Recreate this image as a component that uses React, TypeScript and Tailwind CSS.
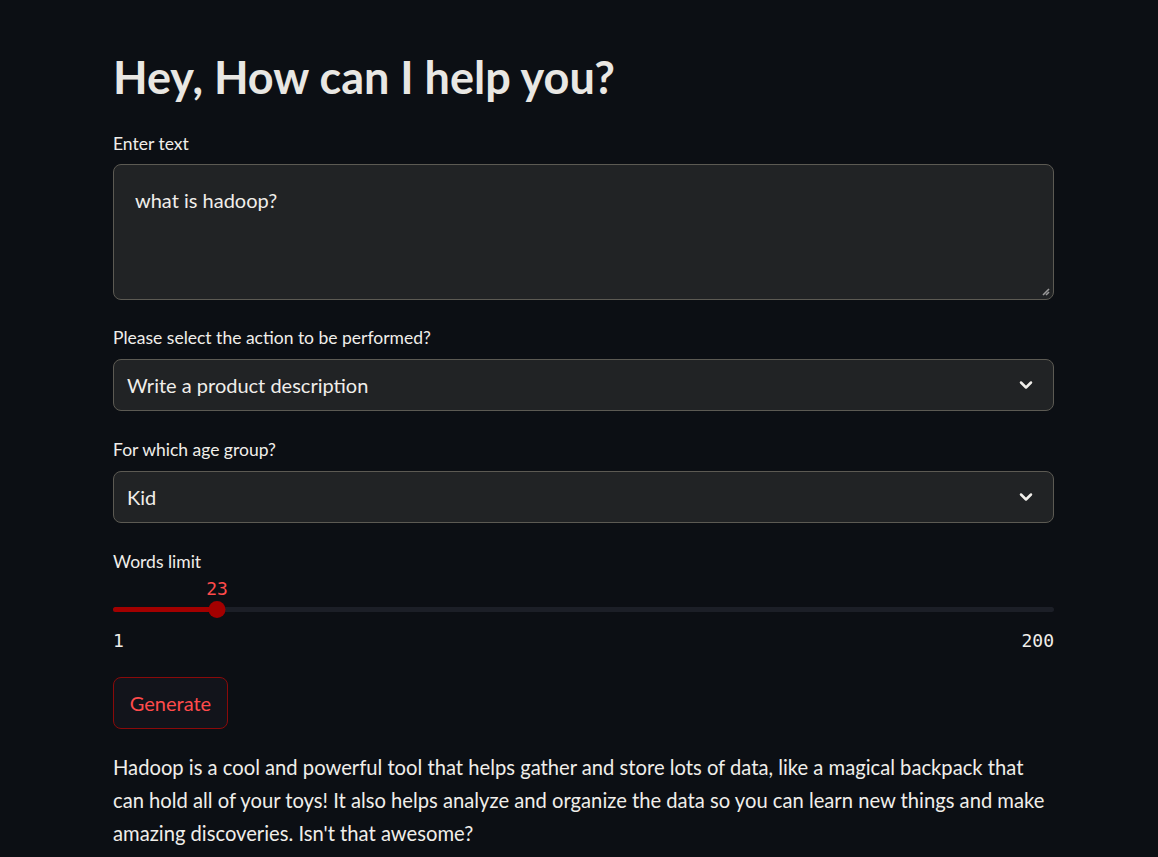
import React, { useState } from 'react'

const font = { fontFamily: 'Lato, "Noto Sans", sans-serif' }
const mono = { fontFamily: '"DejaVu Sans Mono", "Liberation Mono", monospace' }

const Chevron = () => (
    <svg width="20" height="20" viewBox="0 0 24 24" fill="none" stroke="#f0eeea" strokeWidth="3" strokeLinecap="round" strokeLinejoin="round">
        <polyline points="6 9 12 15 18 9" />
    </svg>
)

const SelectBox = ({ value }: { value: string }) => (
    <div className="flex h-[52px] w-full items-center justify-between rounded-lg border border-[#5c5a53] bg-[#212325] pl-[13px] pr-[17px]">
        <span className="text-[20px] text-[#f0eeea]">{value}</span>
        <Chevron />
    </div>
)

const App = () => {
    const [value] = useState(23)
    const pct = ((value - 1) / 199) * 100

    return (
        <div className="min-h-screen w-full bg-[#0c0f14] text-[#f0eeea]" style={font}>
            <div className="ml-[113px] flex w-[941px] flex-col pt-[46px]">
                <h1 className="h-[62px] text-[45px] font-bold leading-[62px] text-[#e9e7e3]">Hey, How can I help you?</h1>

                <label className="mt-[22px] h-[28px] text-[17.5px] leading-[28px]">Enter text</label>
                <div className="relative mt-[6px] h-[136px] rounded-lg border border-[#5c5a53] bg-[#212325] px-[21px] pt-[20px]">
                    <span className="text-[20px]">what is hadoop?</span>
                    <svg className="absolute bottom-[3px] right-[3px]" width="9" height="9" viewBox="0 0 9 9">
                        <line x1="8" y1="2" x2="2" y2="8" stroke="#9a9a9a" strokeWidth="1.6" />
                        <line x1="8" y1="5" x2="5" y2="8" stroke="#9a9a9a" strokeWidth="1.6" />
                    </svg>
                </div>

                <label className="mt-[24px] h-[28px] text-[17.5px] leading-[28px]">Please select the action to be performed?</label>
                <div className="mt-[7px]">
                    <SelectBox value="Write a product description" />
                </div>

                <label className="mt-[25px] h-[28px] text-[17.5px] leading-[28px]">For which age group?</label>
                <div className="mt-[7px]">
                    <SelectBox value="Kid" />
                </div>

                <label className="mt-[25px] h-[28px] text-[17.5px] leading-[28px]">Words limit</label>
                <div className="relative mt-[2px] h-[53px]">
                    <div
                        className="absolute top-[1px] -translate-x-1/2 text-[18px] leading-[20px] text-[#ff4b4b]"
                        style={{ left: `${pct}%`, ...mono }}
                    >
                        {value}
                    </div>
                    <div className="absolute left-0 right-0 top-[29px] h-[5px] rounded-full bg-[#1c1f27]" />
                    <div className="absolute left-0 top-[29px] h-[5px] rounded-full bg-[#a30000]" style={{ width: `${pct}%` }} />
                    <div
                        className="absolute top-[23px] h-[17px] w-[17px] -translate-x-1/2 rounded-full bg-[#a30000]"
                        style={{ left: `${pct}%` }}
                    />
                </div>
                <div className="flex justify-between text-[18px] leading-[20px] text-[#f0eeea]" style={mono}>
                    <span>1</span>
                    <span>200</span>
                </div>

                <div className="mt-[26px]">
                    <button className="h-[52px] w-[115px] rounded-lg border border-[#8a0a0a] bg-[#12141b] text-[20px] text-[#ff4b4b]">
                        Generate
                    </button>
                </div>

                <p className="mt-[22px] text-[20.2px] leading-[33px] text-[#f0eeea]">
                    Hadoop is a cool and powerful tool that helps gather and store lots of data, like a magical backpack that can hold all of your toys! It also helps analyze and organize the data so you can learn new things and make amazing discoveries. Isn't that awesome?
                </p>
            </div>
        </div>
    )
}

export default App
